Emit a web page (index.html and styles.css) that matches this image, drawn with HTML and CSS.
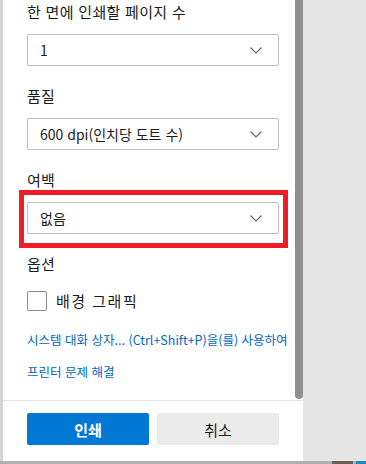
FILE: index.html
```html
<!DOCTYPE html>
<html lang="ko">
<head>
    <meta charset="UTF-8" />
    <title>인쇄</title>
    <link rel="stylesheet" href="styles.css">
</head>
<body>
<div class="screen">
    <div class="panel">
        <div class="scroll-area">
            <div class="settings">
                <div class="field">
                    <div class="field-label">한 면에 인쇄할 페이지 수</div>
                    <div class="select">
                        <span>1</span>
                        <svg class="chevron" width="12" height="7" viewBox="0 0 12 7"><path d="M0.5 0.5 L6 6 L11.5 0.5" fill="none" stroke="#666" stroke-width="1.1"/></svg>
                    </div>
                </div>

                <div class="field">
                    <div class="field-label">품질</div>
                    <div class="select">
                        <span>600 dpi(인치당 도트 수)</span>
                        <svg class="chevron" width="12" height="7" viewBox="0 0 12 7"><path d="M0.5 0.5 L6 6 L11.5 0.5" fill="none" stroke="#666" stroke-width="1.1"/></svg>
                    </div>
                </div>

                <div class="field">
                    <div class="field-label">여백</div>
                    <div class="select highlighted">
                        <span>없음</span>
                        <svg class="chevron" width="12" height="7" viewBox="0 0 12 7"><path d="M0.5 0.5 L6 6 L11.5 0.5" fill="none" stroke="#666" stroke-width="1.1"/></svg>
                    </div>
                </div>

                <div class="field">
                    <div class="field-label">옵션</div>
                    <label class="check-row">
                        <span class="checkbox"></span>
                        <span>배경 그래픽</span>
                    </label>
                </div>

                <a class="link first-link">시스템 대화 상자... (Ctrl+Shift+P)을(를) 사용하여</a>
                <a class="link">프린터 문제 해결</a>
            </div>
            <div class="scroll-thumb"></div>
        </div>

        <div class="actions">
            <button class="btn btn-primary">인쇄</button>
            <button class="btn btn-secondary">취소</button>
        </div>
    </div>
    <div class="backdrop"></div>
</div>
<div class="bottom-strip">
    <span class="thumb-img"></span>
    <span class="thumb-blue"></span>
</div>
</body>
</html>
```

FILE: styles.css
```css
:root {
    --text-color: #1b1b1b;
    --border-color: #bfbfbf;
    --accent: #0078d4;
    --link-color: #0067c0;
}

body {
    margin: 0;
    background-color: #e6e6e6;
    font-family: "Noto Sans CJK KR", "Noto Sans", sans-serif;
    color: var(--text-color);
    overflow: hidden;
}

.screen {
    display: flex;
    height: 461px;
}

.panel {
    width: 300px;
    border-left: 3px solid #d4d4d4;
    background-color: white;
    display: flex;
    flex-direction: column;
}

.backdrop {
    flex: 1;
    background-color: #e6e6e6;
}

.scroll-area {
    display: flex;
    height: 400px;
    border-bottom: 1px solid #e3e3e3;
}

.settings {
    flex: 1;
    padding: 2px 0 0 24px;
}

.scroll-thumb {
    width: 8px;
    height: 399px;
    background-color: #8f8f8f;
    border-radius: 0 0 4px 4px;
}

.field {
    margin-bottom: 20px;
    width: 252px;
}

.field-label {
    font-size: 15px;
    line-height: 20px;
    margin-bottom: 12px;
    letter-spacing: 0.3px;
}

.select {
    position: relative;
    height: 32px;
    box-sizing: border-box;
    border: 1px solid var(--border-color);
    border-radius: 2px;
    display: flex;
    align-items: center;
    justify-content: space-between;
    padding: 0 16px 0 12px;
    font-size: 14px;
}

.highlighted::after {
    content: "";
    position: absolute;
    left: -9px;
    right: -10px;
    top: -13px;
    bottom: -15px;
    border: 5px solid #ee1c25;
}

.chevron {
    display: block;
}

.check-row {
    display: flex;
    align-items: center;
    gap: 9px;
    font-size: 15px;
    letter-spacing: 1.5px;
    margin-top: 16px;
    margin-bottom: -1px;
}

.checkbox {
    width: 20px;
    height: 20px;
    box-sizing: border-box;
    border: 1px solid #8a8a8a;
    border-radius: 2px;
}

.link {
    display: block;
    font-size: 12.5px;
    line-height: 20px;
    color: var(--link-color);
    white-space: nowrap;
}

.first-link {
    margin-bottom: 12px;
}

.actions {
    display: flex;
    gap: 8px;
    padding: 12px 0 0 24px;
}

.btn {
    width: 122px;
    height: 32px;
    border: none;
    border-radius: 2px;
    font-family: inherit;
    font-size: 15px;
}

.btn-primary {
    background-color: var(--accent);
    color: white;
    font-weight: bold;
}

.btn-secondary {
    background-color: #ebebeb;
    color: var(--text-color);
}

.bottom-strip {
    height: 3px;
    background-color: #b0b0b0;
    display: flex;
    justify-content: flex-end;
}

.thumb-img {
    width: 21px;
    background-color: #6b6157;
    margin-right: 3px;
}

.thumb-blue {
    width: 10px;
    background-color: #1d86c8;
}
```
